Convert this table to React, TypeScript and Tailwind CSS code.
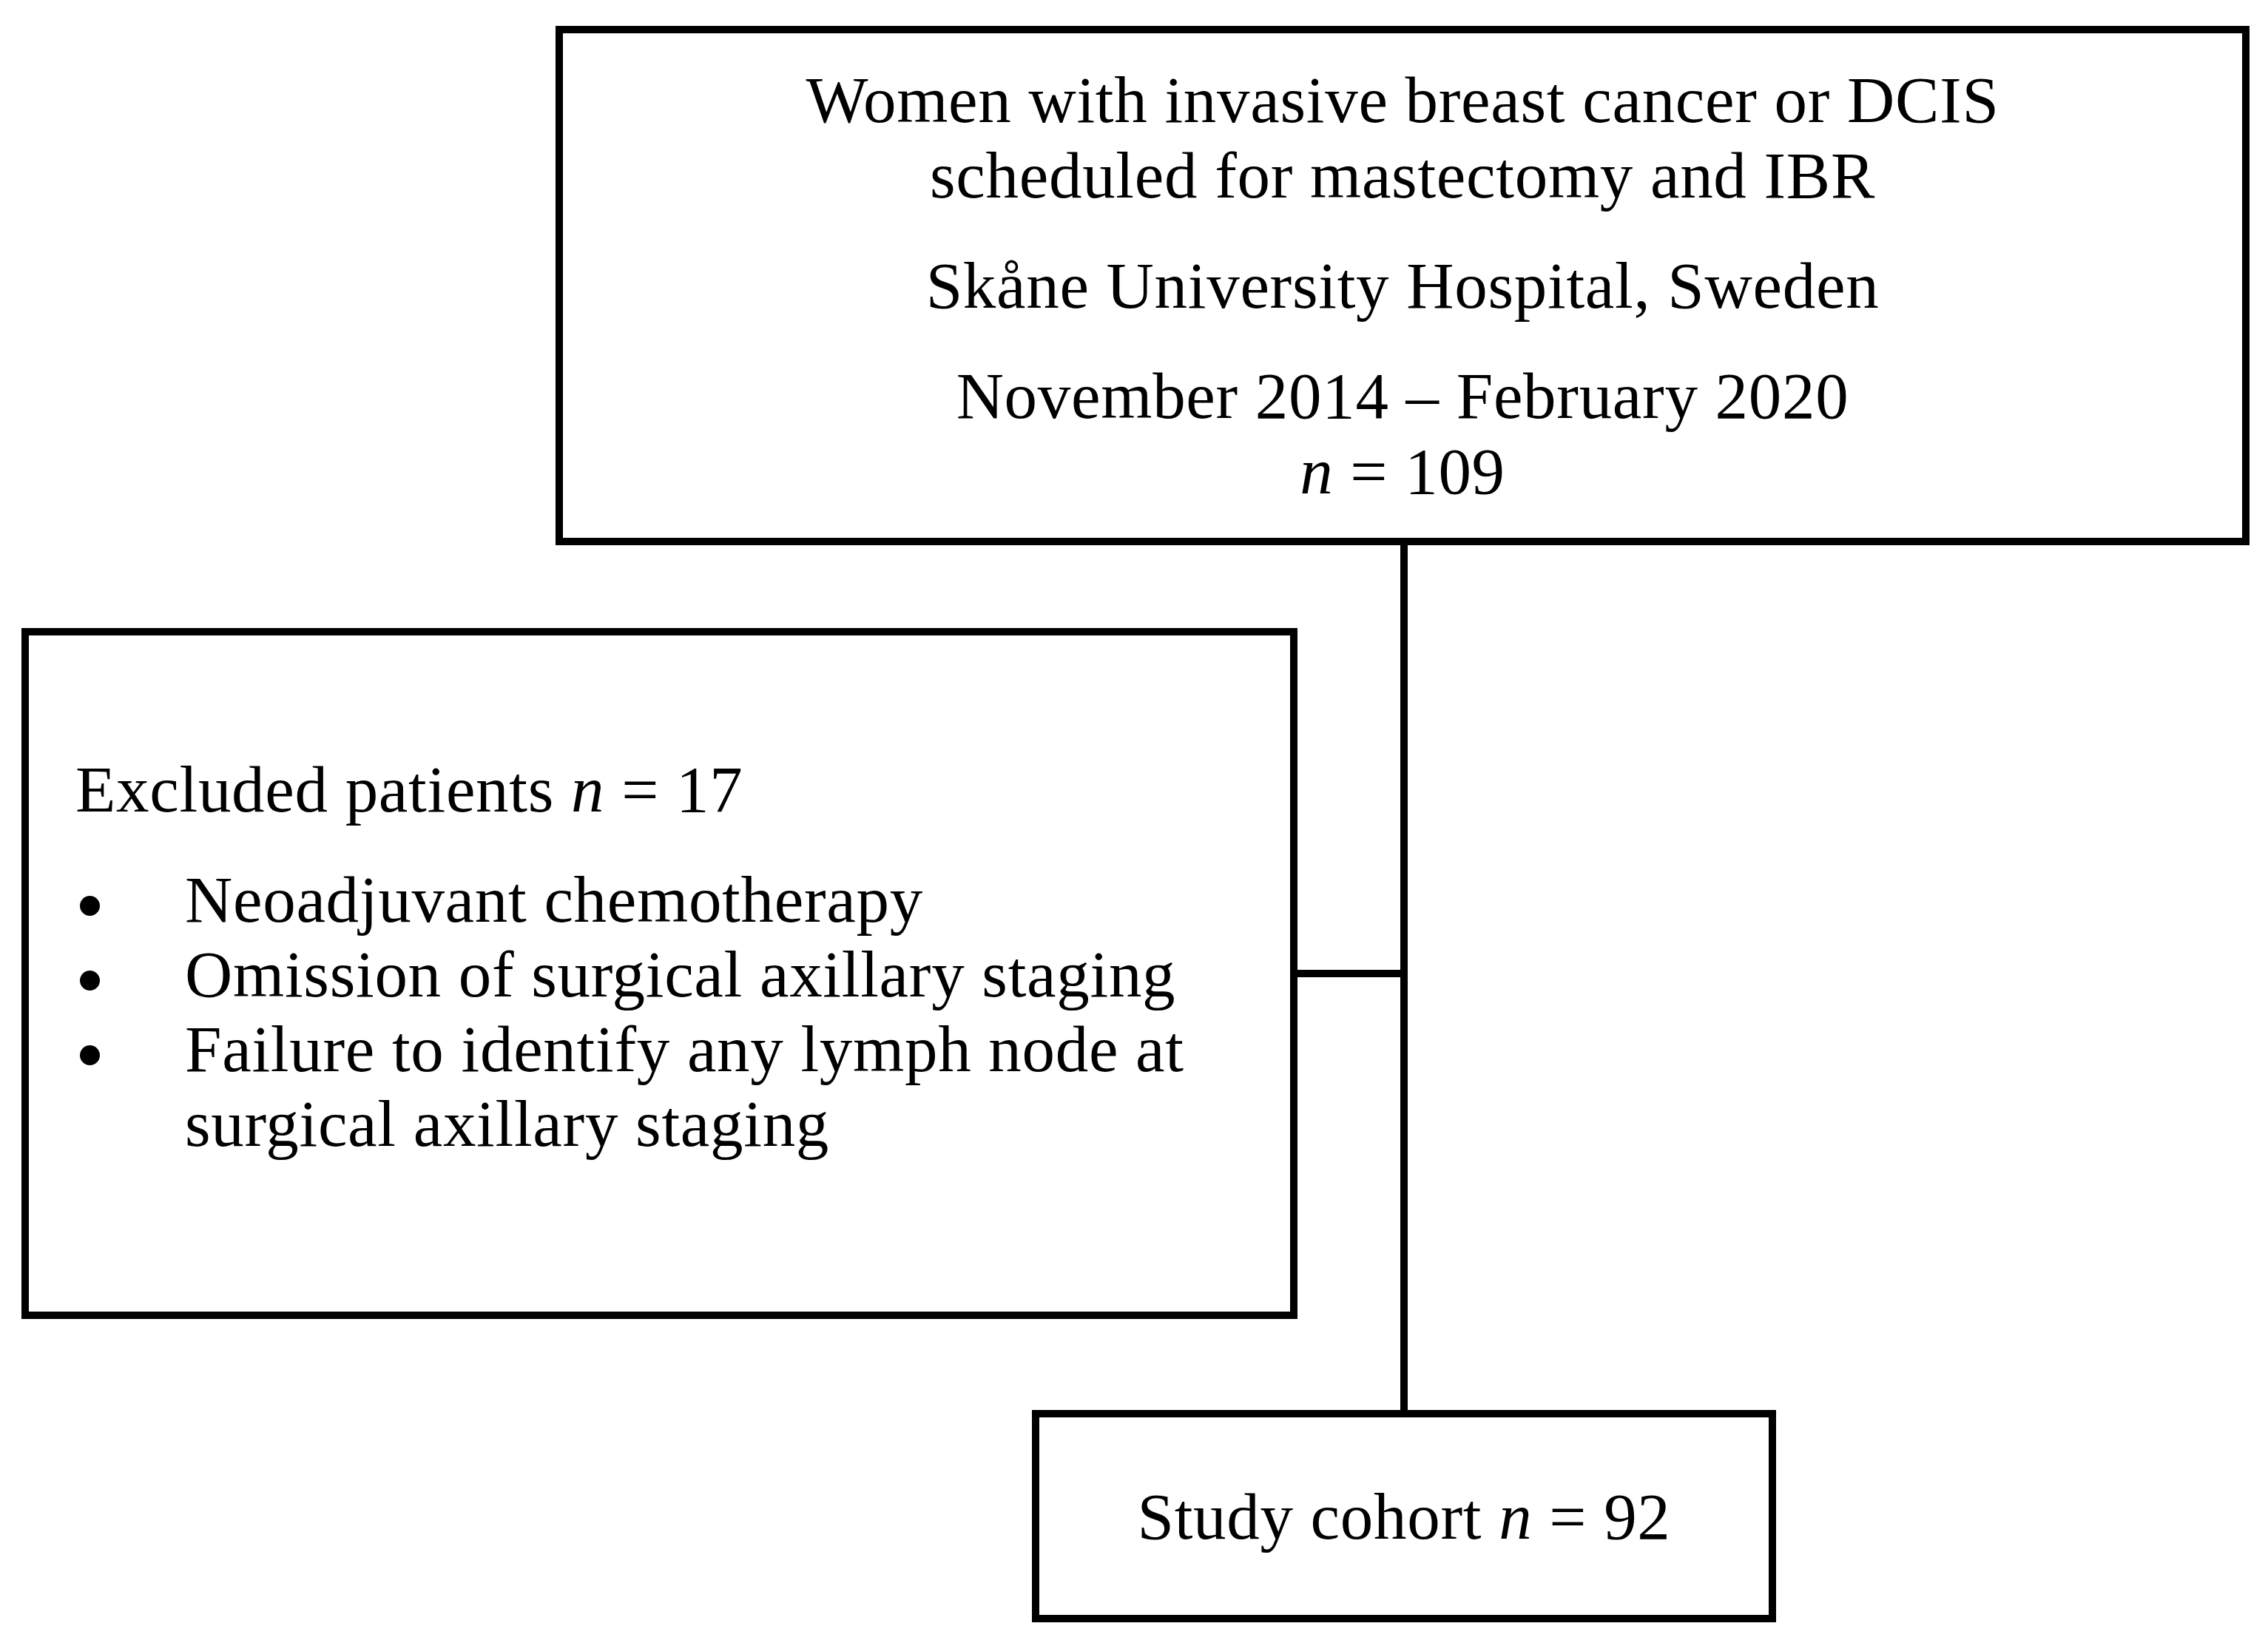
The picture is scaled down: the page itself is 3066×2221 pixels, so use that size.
const serif = "font-['Liberation_Serif',serif] tracking-[0.7px] text-black";

const Line = ({ className = '' }: { className?: string }) => (
  <div className={`bg-black shrink-0 ${className}`} />
);

const Bullet = ({ children }: { children: React.ReactNode }) => (
  <li className="flex">
    <span className="w-[148px] shrink-0 pl-[6px]">
      <span className="block mt-[45px] w-[27px] h-[27px] rounded-full bg-black" />
    </span>
    <span>{children}</span>
  </li>
);

export default function App() {
  return (
    <div className={`w-[3066px] h-[2221px] bg-white ${serif} text-[89px] leading-[102px]`}>
      {/* Enrolled */}
      <div className="pt-[35px] pl-[751px]">
        <div className="w-[2290px] h-[702px] border-[10px] border-black flex flex-col items-center justify-center text-center">
          <p>
            Women with invasive breast cancer or DCIS
            <br />
            scheduled for mastectomy and IBR
          </p>
          <p className="mt-[47px]">Skåne University Hospital, Sweden</p>
          <p className="mt-[47px]">
            November 2014 – February 2020
            <br />
            <i>n</i> = 109
          </p>
        </div>
      </div>

      {/* Exclusions + connectors */}
      <div className="flex items-start h-[1169px]">
        <div className="ml-[29px] mt-[112px] w-[1725px] h-[934px] border-[10px] border-black pt-[158px] pl-[63px] pr-[40px] leading-[101px]">
          <p>
            Excluded patients <i>n</i> = 17
          </p>
          <ul className="mt-[48px]">
            <Bullet>Neoadjuvant chemotherapy</Bullet>
            <Bullet>Omission of surgical axillary staging</Bullet>
            <Bullet>Failure to identify any lymph node at surgical axillary staging</Bullet>
          </ul>
        </div>
        <Line className="w-[139px] h-[10px] mt-[574px]" />
        <Line className="w-[10px] h-[1169px]" />
      </div>

      {/* Study cohort */}
      <div className="pl-[1395px]">
        <div className="w-[1006px] h-[287px] border-[10px] border-black flex items-center justify-center">
          <p>
            Study cohort <i>n</i> = 92
          </p>
        </div>
      </div>
    </div>
  );
}
